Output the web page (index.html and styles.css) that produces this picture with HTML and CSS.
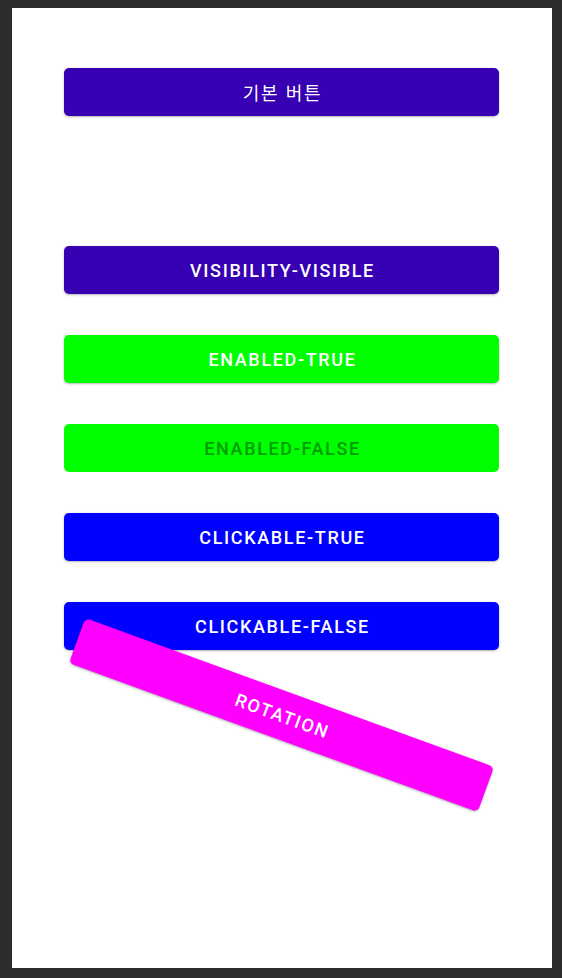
FILE: index.html
```html
<!DOCTYPE html>
<html lang="ko">
<head>
<meta charset="utf-8">
<title>Buttons</title>
<link rel="stylesheet" href="styles.css">
</head>
<body>
<div class="screen">
  <div class="stack">
    <button class="btn btn-primary btn-ko">기본 버튼</button>
    <button class="btn btn-primary is-hidden">VISIBILITY-INVISIBLE</button>
    <button class="btn btn-primary">VISIBILITY-VISIBLE</button>
    <button class="btn btn-green">ENABLED-TRUE</button>
    <button class="btn btn-green is-disabled">ENABLED-FALSE</button>
    <button class="btn btn-blue">CLICKABLE-TRUE</button>
    <button class="btn btn-blue">CLICKABLE-FALSE</button>
    <button class="btn btn-magenta is-rotated">ROTATION</button>
  </div>
</div>
</body>
</html>
```
FILE: styles.css
```css
html, body {
  margin: 0;
  padding: 0;
}
body {
  background: #2b2c2e;
  width: 562px;
  height: 978px;
  overflow: hidden;
}
.screen {
  margin: 8px 10px 0 12px;
  width: 540px;
  height: 960px;
  background: #ffffff;
  box-sizing: border-box;
  padding: 60px 0 0 52px;
}
.stack {
  display: flex;
  flex-direction: column;
  gap: 41px;
  width: 435px;
}
.btn {
  display: flex;
  align-items: center;
  justify-content: center;
  height: 48px;
  width: 100%;
  border: none;
  border-radius: 5px;
  padding: 0 0 0 2px;
  margin: 0;
  font-family: Roboto, "Noto Sans CJK KR", sans-serif;
  font-weight: 500;
  font-size: 18px;
  letter-spacing: 1.65px;
  color: #ffffff;
  box-shadow: 0 1px 3px rgba(0, 0, 0, 0.22), 0 1px 1px rgba(0, 0, 0, 0.1);
}
.btn-ko {
  font-family: "Noto Sans CJK KR", sans-serif;
  font-weight: 400;
  font-size: 18px;
  letter-spacing: 1.6px;
}
.btn-primary { background: #3700b3; }
.btn-green { background: #00ff00; }
.btn-blue { background: #0000ff; }
.btn-magenta { background: #ff00ff; }
.is-disabled { color: #009e00; box-shadow: none; }
.is-hidden { visibility: hidden; }
.is-rotated { transform: rotate(20deg); }
```
